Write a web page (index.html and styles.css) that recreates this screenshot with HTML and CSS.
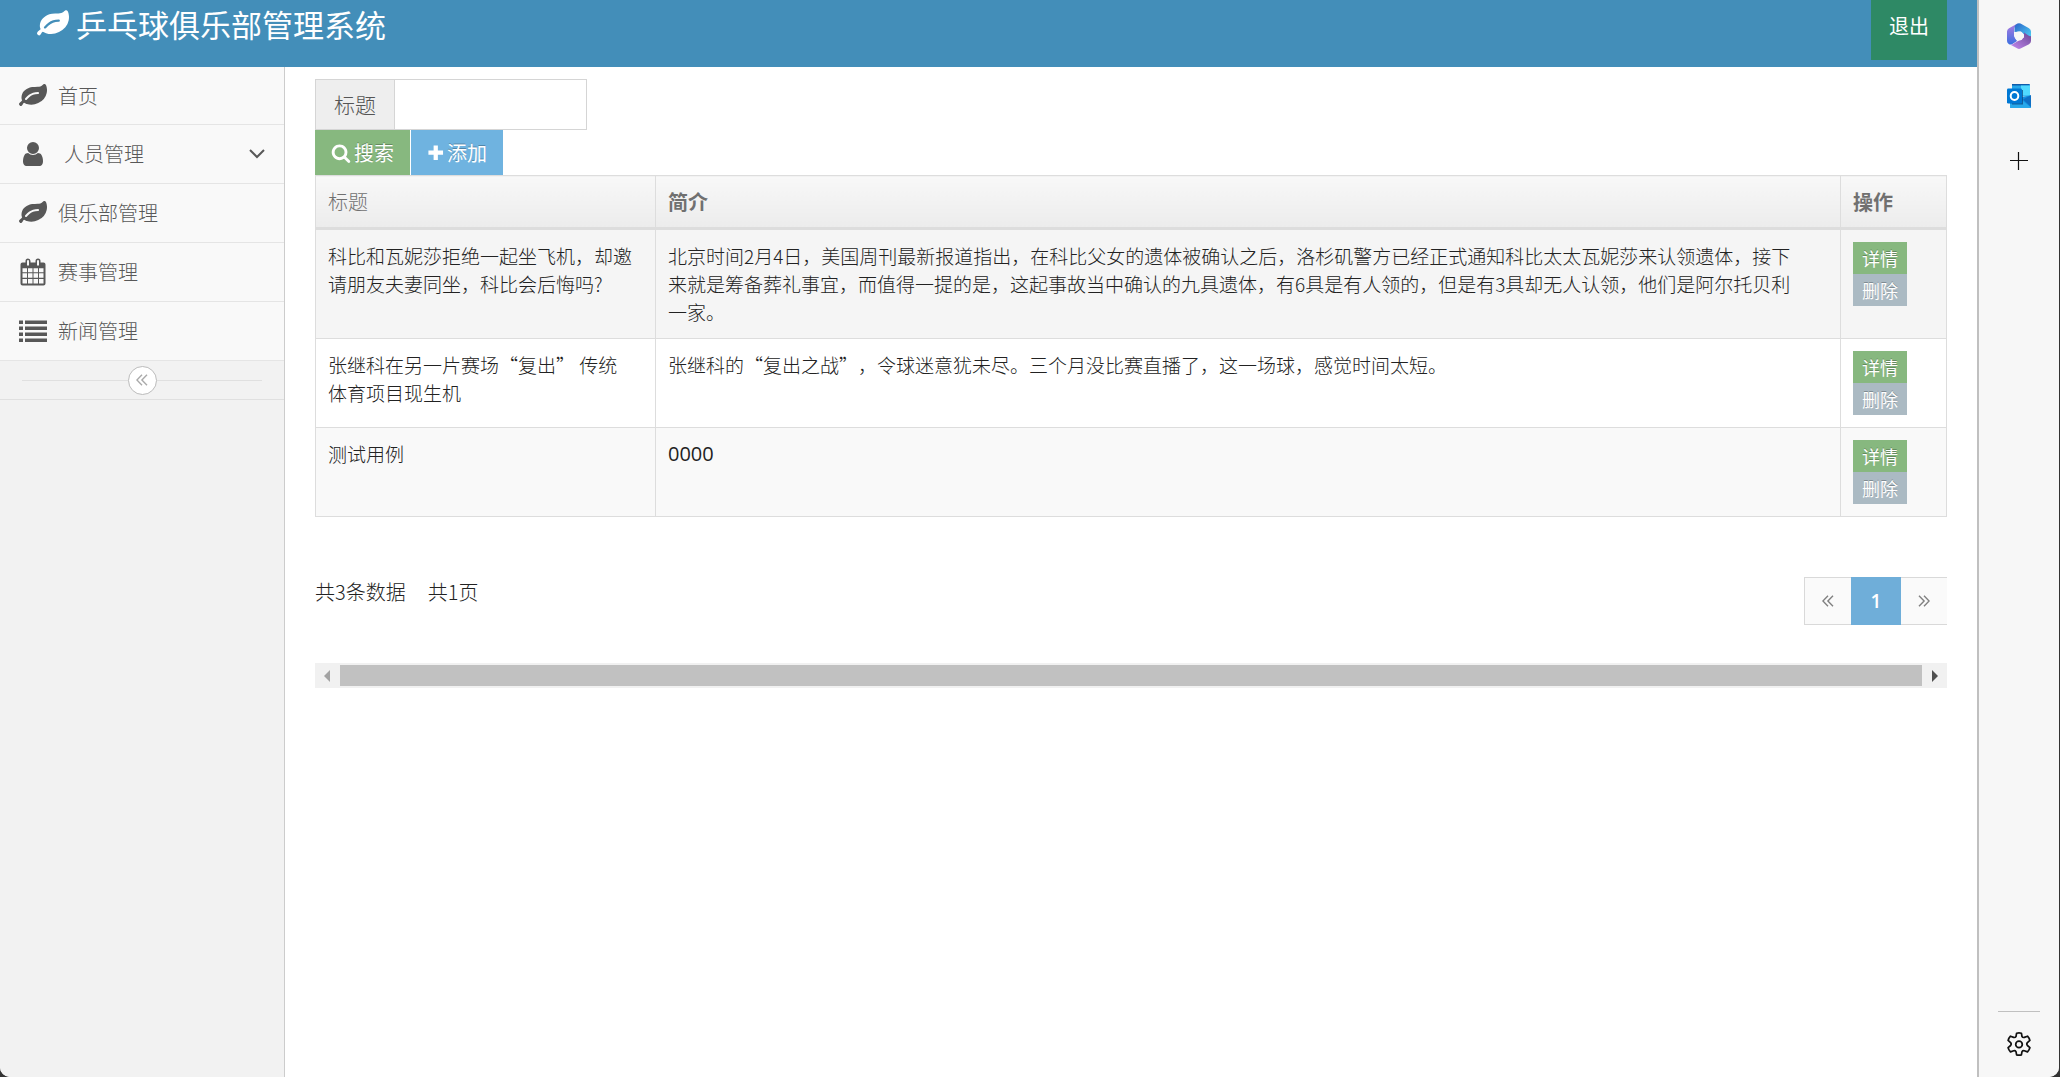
FILE: index.html
```html
<!DOCTYPE html>
<html lang="zh-CN">
<head>
<meta charset="UTF-8" />
<meta name="viewport" content="width=device-width, initial-scale=1" />
<title>乒乓球俱乐部管理系统</title>
<link rel="stylesheet" href="styles.css">
</head>
<body>
<svg class="sprite" aria-hidden="true">
  <symbol id="leaf" viewBox="0 0 1792 1792"><path d="M1280 704q0-26-19-45t-45-19q-172 0-318 49.5t-259.5 134-235.5 219.5q-19 21-19 45 0 26 19 45t45 19q24 0 45-19 27-24 74-71t67-66q137-124 268.5-176t313.5-52q26 0 45-19t19-45zm512-198q0 95-20 193-46 224-184.5 383t-357.5 268q-214 108-438 108-148 0-286-47-15-5-88-42t-96-37q-16 0-39.5 32t-45 70-52.5 70-60 32q-43 0-63.5-17.5t-45.5-59.5q-2-4-6-11t-5.5-10-3-9.5-1.5-13.5q0-35 31-73.5t68-65.5 68-56 31-48q0-4-14-38t-16-44q-9-51-9-104 0-115 43.5-220t119-184.5 170.5-139 204-95.5q55-18 145-25.5t179.5-9 178.5-6 163.5-24 113.5-56.5l29.5-29.5 29.5-28 27-20 36.5-16 43.5-4.5q39 0 70.5 46t47.5 112 24 124 8 96z"/></symbol>
  <symbol id="user" viewBox="0 0 1792 1792"><path d="M1536 1399q0 109-62.5 187t-150.5 78h-854q-88 0-150.5-78t-62.5-187q0-85 8.5-160.5t31.5-152 58.5-131 94-89 134.5-34.5q131 128 313 128t313-128q76 0 134.5 34.5t94 89 58.5 131 31.5 152 8.5 160.5zm-256-887q0 159-112.5 271.5t-271.5 112.5-271.5-112.5-112.5-271.5 112.5-271.5 271.5-112.5 271.5 112.5 112.5 271.5z"/></symbol>
  <symbol id="search" viewBox="0 0 1792 1792"><path d="M1216 832q0-185-131.5-316.5t-316.5-131.5-316.5 131.5-131.5 316.5 131.5 316.5 316.5 131.5 316.5-131.5 131.5-316.5zm512 832q0 52-38 90t-90 38q-54 0-90-38l-343-342q-179 124-399 124-143 0-273.5-55.5t-225-150-150-225-55.5-273.5 55.5-273.5 150-225 225-150 273.5-55.5 273.5 55.5 225 150 150 225 55.5 273.5q0 220-124 399l343 343q37 37 37 90z"/></symbol>
  <symbol id="plus" viewBox="0 0 18 18"><path d="M7 1.5h4.500v5.500h5.500v4.500h-5.500v5.500h-4.500v-5.500h-5.500v-4.500h5.500z"/></symbol>
  <symbol id="calendar" viewBox="0 0 28 28"><path fill-rule="evenodd" d="M3.500 4.500h3v-1.500a2.500 2.500 0 0 1 5 0v1.500h5v-1.500a2.500 2.500 0 0 1 5 0v1.500h3a2 2 0 0 1 2 2v19a2 2 0 0 1-2 2h-21a2 2 0 0 1-2-2v-19a2 2 0 0 1 2-2zM8 3v4.500h2v-4.500a1 1 0 0 0-2 0zM18 3v4.500h2v-4.500a1 1 0 0 0-2 0zM3.500 10.200v4h4.500v-4zM9 10.200v4h4.500v-4zM14.500 10.200v4h4.500v-4zM20 10.200v4h4.500v-4zM3.500 15.300v4.500h4.500v-4.500zM9 15.300v4.500h4.500v-4.500zM14.500 15.300v4.500h4.500v-4.500zM20 15.300v4.500h4.500v-4.500zM3.500 21v4.500h4.500v-4.500zM9 21v4.500h4.500v-4.500zM14.500 21v4.500h4.500v-4.500zM20 21v4.500h4.500v-4.500z"/></symbol>
  <symbol id="list" viewBox="0 0 28 28"><path d="M0 3.500h4v3.500h-4zM6 3.500h22v3.500h-22zM0 9.500h4v3.500h-4zM6 9.500h22v3.500h-22zM0 15.500h4v3.500h-4zM6 15.500h22v3.500h-22zM0 21.500h4v3.500h-4zM6 21.500h22v3.500h-22z"/></symbol>
  <symbol id="double-left" viewBox="0 0 12 12"><path d="M6 0.800L0.900 6L6 11.200M11 0.800L5.900 6L11 11.200" fill="none" stroke="currentColor" stroke-width="1.400"/></symbol>
  <symbol id="double-right" viewBox="0 0 12 12"><path d="M1 0.800L6.100 6L1 11.200M6 0.800L11.100 6L6 11.200" fill="none" stroke="currentColor" stroke-width="1.400"/></symbol>
</svg>

<div class="window">
  <div class="page">
    <header class="navbar">
      <a href="#" class="brand"><svg class="brand-icon"><use href="#leaf"/></svg>乒乓球俱乐部管理系统</a>
      <a href="#" class="logout">退出</a>
    </header>

    <div class="main-container">
      <nav class="sidebar">
        <ul class="nav-list">
          <li><a href="#"><svg class="menu-icon"><use href="#leaf"/></svg>首页</a></li>
          <li>
            <a href="#" class="dropdown-toggle"><svg class="menu-icon"><use href="#user"/></svg>人员管理
              <svg class="arrow" viewBox="0 0 16 10"><path d="M1 1l7 7l7-7" fill="none" stroke="currentColor" stroke-width="2"/></svg>
            </a>
          </li>
          <li><a href="#"><svg class="menu-icon"><use href="#leaf"/></svg>俱乐部管理</a></li>
          <li><a href="#"><svg class="menu-icon"><use href="#calendar"/></svg>赛事管理</a></li>
          <li><a href="#"><svg class="menu-icon"><use href="#list"/></svg>新闻管理</a></li>
        </ul>
        <div class="sidebar-collapse">
          <button type="button" aria-label="收起菜单"><svg><use href="#double-left"/></svg></button>
        </div>
      </nav>

      <main class="page-content">
        <form class="search-form">
          <div class="input-group">
            <label for="title">标题</label>
            <input type="text" id="title" name="title" />
          </div>
          <div class="btn-row">
            <button type="button" class="btn btn-success"><svg><use href="#search"/></svg>搜索</button>
            <button type="button" class="btn btn-info"><svg><use href="#plus"/></svg>添加</button>
          </div>
        </form>

        <table class="table">
          <colgroup>
            <col class="col-title">
            <col>
            <col class="col-action">
          </colgroup>
          <thead>
            <tr><th class="first">标题</th><th>简介</th><th>操作</th></tr>
          </thead>
          <tbody>
            <tr class="hover">
              <td class="title">科比和瓦妮莎拒绝一起坐飞机，却邀请朋友夫妻同坐，科比会后悔吗?</td>
              <td class="intro">北京时间2月4日，美国周刊最新报道指出，在科比父女的遗体被确认之后，洛杉矶警方已经正式通知科比太太瓦妮莎来认领遗体，接下来就是筹备葬礼事宜，而值得一提的是，这起事故当中确认的九具遗体，有6具是有人领的，但是有3具却无人认领，他们是阿尔托贝利一家。</td>
              <td><div class="actions"><button type="button" class="btn-xs btn-success">详情</button><button type="button" class="btn-xs btn-grey">删除</button></div></td>
            </tr>
            <tr>
              <td class="title">张继科在另一片赛场“复出” 传统体育项目现生机</td>
              <td class="intro">张继科的“复出之战”，令球迷意犹未尽。三个月没比赛直播了，这一场球，感觉时间太短。</td>
              <td><div class="actions"><button type="button" class="btn-xs btn-success">详情</button><button type="button" class="btn-xs btn-grey">删除</button></div></td>
            </tr>
            <tr>
              <td class="title">测试用例</td>
              <td class="intro number">0000</td>
              <td><div class="actions"><button type="button" class="btn-xs btn-success">详情</button><button type="button" class="btn-xs btn-grey">删除</button></div></td>
            </tr>
          </tbody>
        </table>

        <div class="table-footer">
          <div class="summary"><span>共3条数据</span><span>共1页</span></div>
          <div class="pagination">
            <a href="#" aria-label="上一页"><svg><use href="#double-left"/></svg></a>
            <a href="#" class="active">1</a>
            <a href="#" aria-label="下一页"><svg><use href="#double-right"/></svg></a>
          </div>
        </div>

        <div class="scrollbar">
          <svg class="scroll-left" viewBox="0 0 6 12"><path d="M6 0v12l-6-6z"/></svg>
          <div class="thumb"></div>
          <svg class="scroll-right" viewBox="0 0 6 12"><path d="M0 0v12l6-6z"/></svg>
        </div>
      </main>
    </div>
  </div>

  <aside class="rail">
    <svg class="rail-office" viewBox="0 0 24 26">
      <defs>
        <linearGradient id="g1" x1="0" y1="0" x2="0" y2="1"><stop offset="0" stop-color="#b07be0"/><stop offset="1" stop-color="#3b6fe0"/></linearGradient>
        <linearGradient id="g2" x1="0" y1="0" x2="1" y2="1"><stop offset="0" stop-color="#2a63c9"/><stop offset="1" stop-color="#4fd3f5"/></linearGradient>
        <linearGradient id="g3" x1="0" y1="1" x2="1" y2="0"><stop offset="0" stop-color="#c58af0"/><stop offset="1" stop-color="#6a4796"/></linearGradient>
      </defs>
      <path d="M10.500 .6L2 5.300Q0 6.500 0 8.500V18q0 2 2 3.200 1.500.8 3 0L10 18 7 13V5z" fill="url(#g1)"/>
      <path d="M7.500 9V4.500q0-2 1.500-3L10.500.6q1.500-.8 3 0L22 5.300q2 1.200 2 3.200V14q-1 2-3.500 1L14 8.500z" fill="url(#g2)"/>
      <path d="M24 13V18q0 2-2 3.200l-8.500 4.400q-1.500.8-3 0L3.500 21.800q1 0 2-.6L17 14.500V9.500l4.500 3q1.500 1 2.500.500z" fill="url(#g3)"/>
      <circle cx="12" cy="13" r="4.500" fill="#f7f7f7"/>
    </svg>
    <svg class="rail-outlook" viewBox="0 0 24 24">
      <path d="M5 1q0-1 1-1h16q1 0 1 1v11h-18z" fill="#28a8ea"/>
      <path d="M5 0h17.500v1.500h-17.500z" fill="#0f5cab"/>
      <path d="M14 1.500h9v10h-9z" fill="#50d9ff"/>
      <path d="M3 12.500h13l8-1v11.500q0 1-1 1h-19q-1 0-1-1z" fill="#1490df"/>
      <path d="M16 15.500L24 11v12z" fill="#0f6fc4"/>
      <path d="M3 20l13-3 8 6.500q-.5.500-1 .500h-19q-1 0-1-1z" fill="#28a8ea"/>
      <path d="M5 6h11v14.500h-11z" fill="#0a3f78" opacity=".7"/>
      <rect y="4.500" width="15" height="15" rx="1.200" fill="#0078d4"/>
      <ellipse cx="7.500" cy="12" rx="3.800" ry="4" fill="none" stroke="#fff" stroke-width="2"/>
    </svg>
    <svg class="rail-plus" viewBox="0 0 18 18"><path d="M8.500 0v18M0 8.500h18" stroke="#111" stroke-width="1.200"/></svg>
    <div class="rail-bottom">
      <svg class="rail-gear" viewBox="0 0 26 26"><g fill="none" stroke="#111" stroke-width="1.700" stroke-linejoin="round"><path d="M10.600 1.200q2.400-.6 4.800 0l.6 3.300q.8 1.300 2.300.9l3.200-1.200q1.700 1.800 2.400 4.200l-2.500 2.200q-1.200 1.500 0 2.900l2.500 2.200q-.7 2.400-2.400 4.200l-3.200-1.200q-1.500-.4-2.300.9l-.6 3.300q-2.400.6-4.800 0l-.6-3.300q-.8-1.300-2.300-.9l-3.200 1.200q-1.700-1.800-2.400-4.200l2.500-2.200q1.200-1.500 0-2.900l-2.500-2.200q.7-2.400 2.400-4.200l3.200 1.200q1.500.4 2.300-.9z"/><circle cx="13" cy="12.400" r="3.300"/></g></svg>
    </div>
  </aside>
</div>
</body>
</html>
```
FILE: styles.css
```css
*, *::before, *::after {
  box-sizing: border-box;
}
body {
  margin: 0;
  background: #333;
  font-family: "Noto Sans CJK SC", "Open Sans", sans-serif;
  font-size: 19px;
  font-weight: 300;
  line-height: 28px;
  text-spacing-trim: space-all;
  color: #222;
}
a {
  color: inherit;
  text-decoration: none;
}
button, input {
  font: inherit;
  border: none;
  border-radius: 0;
  padding: 0;
}
svg {
  fill: currentColor;
  flex: none;
}
.sprite {
  position: absolute;
  width: 0;
  height: 0;
}

.window {
  display: flex;
  min-height: 100vh;
  margin-right: 1px;
  border-radius: 0 0 10px 10px;
  overflow: hidden;
  background: #fff;
}
.page {
  flex: 1;
  min-width: 0;
  display: flex;
  flex-direction: column;
}

/* top bar */
.navbar {
  display: flex;
  justify-content: space-between;
  align-items: flex-start;
  height: 67px;
  padding: 0 30px 0 37px;
  background: #438eb9;
  color: #fff;
  font-weight: 400;
}
.brand {
  display: flex;
  align-items: center;
  gap: 7px;
  font-size: 31px;
  line-height: 48px;
}
.brand-icon {
  width: 32px;
  height: 32px;
}
.logout {
  height: 60px;
  padding: 0 18px;
  font-size: 20px;
  line-height: 52px;
  background: #2e8965;
}

/* sidebar */
.main-container {
  flex: 1;
  display: flex;
}
.sidebar {
  width: 285px;
  flex: none;
  background: #f2f2f2;
  border-right: 1px solid #ccc;
}
.nav-list {
  list-style: none;
  margin: 0;
  padding: 0;
}
.nav-list li {
  height: 59px;
  border-bottom: 1px solid #e5e5e5;
  background: #f9f9f9;
}
.nav-list li:first-child {
  height: 58px;
}
.nav-list a {
  display: flex;
  align-items: center;
  gap: 11px;
  height: 100%;
  padding: 0 19px;
  font-size: 20px;
  color: #585858;
}
.nav-list .dropdown-toggle {
  gap: 17px;
}
.menu-icon {
  width: 28px;
  height: 28px;
}
.arrow {
  width: 16px;
  height: 10px;
  margin-left: auto;
}
.sidebar-collapse {
  display: flex;
  align-items: center;
  height: 39px;
  padding: 0 22px;
  border-bottom: 1px solid #e0e0e0;
}
.sidebar-collapse::before, .sidebar-collapse::after {
  content: "";
  flex: 1;
  height: 1px;
  background: #e0e0e0;
}
.sidebar-collapse button {
  display: flex;
  align-items: center;
  justify-content: center;
  width: 29px;
  height: 29px;
  border: 1px solid #bbb;
  border-radius: 50%;
  background: #fff;
  color: #aaa;
}
.sidebar-collapse svg, .pagination svg {
  width: 12px;
  height: 12px;
}

/* content */
.page-content {
  flex: 1;
  min-width: 0;
  padding: 12px 30px;
}
.input-group {
  display: flex;
  width: 272px;
  height: 51px;
  border: 1px solid #d5d5d5;
}
.input-group label {
  padding: 0 18px;
  font-size: 21px;
  line-height: 49px;
  color: #555;
  background: #eee;
  border-right: 1px solid #d5d5d5;
}
.input-group input {
  flex: 1;
  min-width: 0;
  padding: 0 12px;
  background: #fff;
}
.btn-row {
  display: flex;
  gap: 1px;
}
.btn {
  display: flex;
  align-items: center;
  gap: 3px;
  height: 45px;
  padding: 0 16px;
  font-size: 20px;
  font-weight: 400;
  color: #fff;
  text-shadow: 0 -1px 0 rgba(0, 0, 0, 0.25);
}
.btn svg {
  width: 20px;
  height: 20px;
}
.btn-info svg {
  width: 17px;
  height: 17px;
}
.btn-success {
  background: #87b87f;
}
.btn-info {
  background: #6fb3e0;
}
.btn-grey {
  background: #abbac3;
}

.table {
  width: 100%;
  table-layout: fixed;
  border-collapse: collapse;
}
.col-title {
  width: 340px;
}
.col-action {
  width: 106px;
}
.table th, .table td {
  padding: 12px;
  border: 1px solid #ddd;
  text-align: left;
  vertical-align: top;
}
.table th {
  height: 53px;
  padding-bottom: 11px;
  font-size: 20px;
  font-weight: 700;
  color: #707070;
  background: linear-gradient(to bottom, #f8f8f8, #ececec);
  border-bottom: 3px solid #ddd;
}
.table th.first {
  font-weight: 300;
}
.table tbody tr:nth-child(odd) {
  background: #f9f9f9;
}
.table tbody tr.hover {
  background: #f5f5f5;
}
.table .title {
  padding-right: 22px;
}
.table .intro {
  padding-right: 34px;
}
.number {
  font-family: "Open Sans", sans-serif;
  font-size: 20px;
  font-weight: 400;
}
.actions {
  display: flex;
  flex-direction: column;
  align-items: flex-start;
}
.btn-xs {
  height: 32px;
  padding: 0 9px;
  font-size: 18px;
  font-weight: 400;
  color: #fff;
  text-shadow: 0 -1px 0 rgba(0, 0, 0, 0.25);
}

.table-footer {
  display: flex;
  justify-content: space-between;
  align-items: flex-start;
  margin-top: 60px;
}
.summary {
  display: flex;
  gap: 22px;
  line-height: 30px;
  font-size: 20px;
}
.pagination {
  display: flex;
}
.pagination a {
  display: flex;
  align-items: center;
  justify-content: center;
  width: 46px;
  height: 48px;
  background: #fafafa;
  border: 1px solid #d9d9d9;
  border-width: 1px 0;
  color: #808080;
}
.pagination a:first-child {
  width: 47px;
  border-left-width: 1px;
}
.pagination .active {
  width: 50px;
  background: #6faed9;
  border-color: #6faed9;
  color: #fff;
  font-family: "Open Sans", sans-serif;
  font-weight: 600;
}

.scrollbar {
  display: flex;
  align-items: center;
  gap: 10px;
  height: 25px;
  margin-top: 38px;
  padding: 2px 9px;
  background: #f1f1f1;
}
.scrollbar svg {
  width: 6px;
  height: 12px;
}
.scroll-left {
  color: #a3a3a3;
}
.scroll-right {
  color: #505050;
}
.thumb {
  flex: 1;
  height: 21px;
  background: #c1c1c1;
}

/* right tool rail */
.rail {
  display: flex;
  flex-direction: column;
  align-items: center;
  width: 82px;
  flex: none;
  padding-top: 23px;
  background: #f7f7f7;
  border-left: 2px solid #c0c0c0;
}
.rail-office {
  width: 24px;
  height: 26px;
}
.rail-outlook {
  width: 24px;
  height: 24px;
  margin-top: 35px;
}
.rail-plus {
  width: 18px;
  height: 18px;
  margin-top: 44px;
}
.rail-bottom {
  display: flex;
  justify-content: center;
  width: 42px;
  height: 66px;
  margin-top: auto;
  padding-top: 20px;
  border-top: 1px solid #c0c0c0;
}
.rail-gear {
  width: 26px;
  height: 26px;
}
```
